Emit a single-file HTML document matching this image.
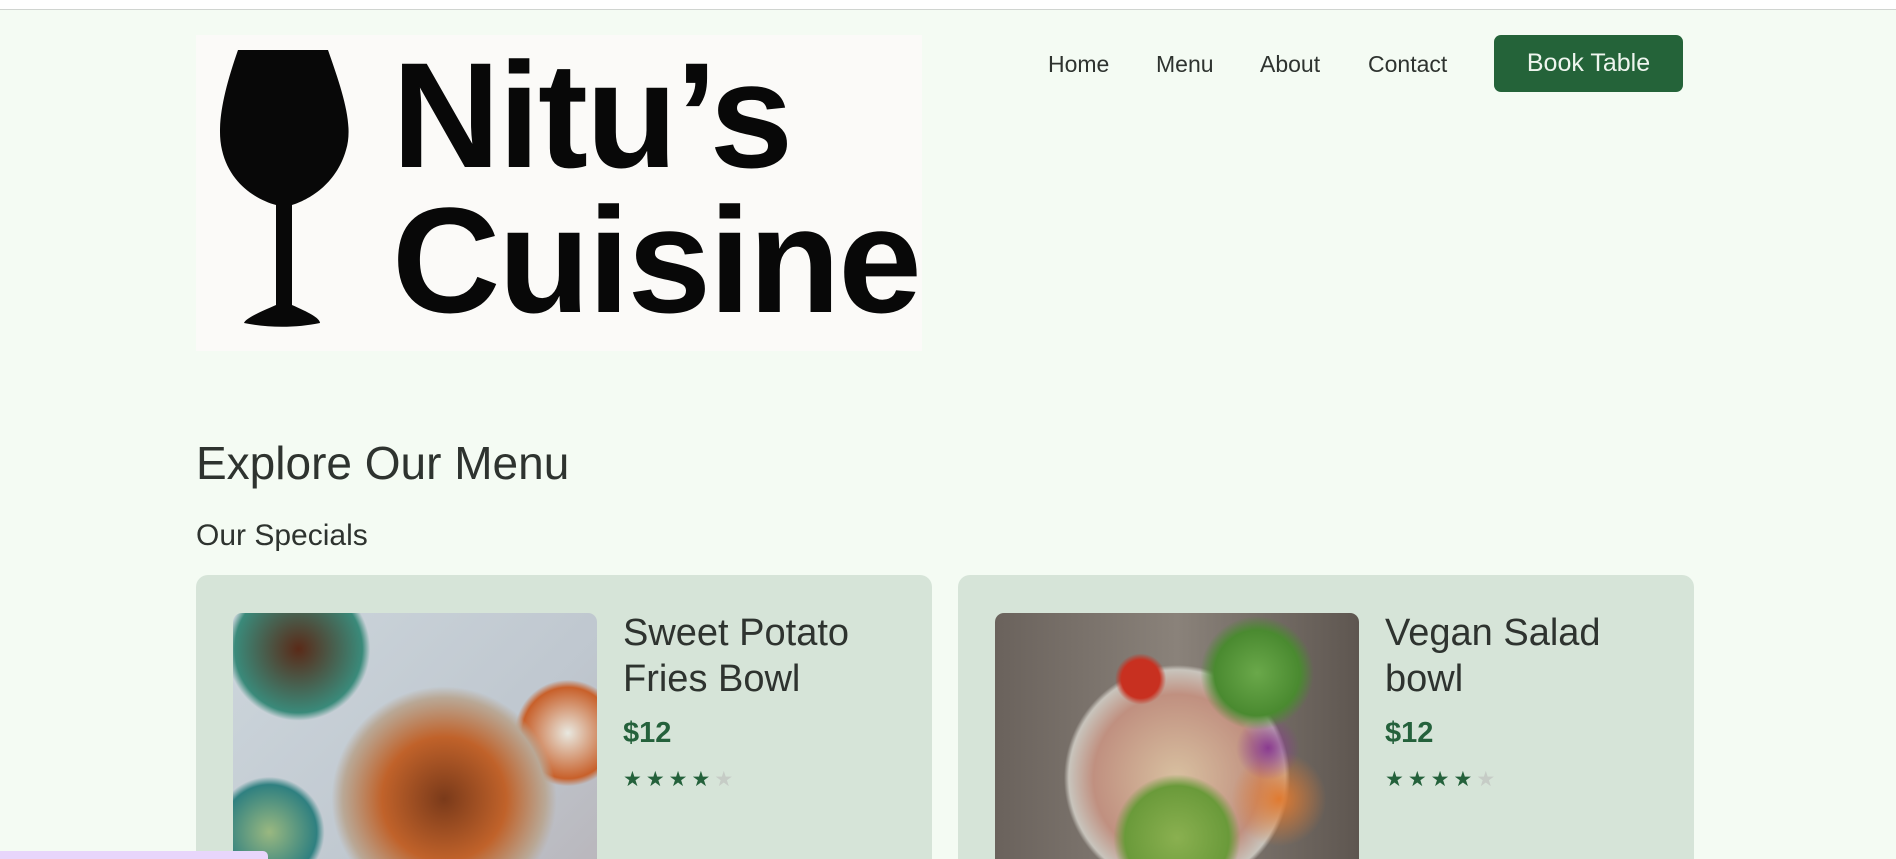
<!DOCTYPE html>
<html><head><meta charset="utf-8"><style>
*{margin:0;padding:0;box-sizing:border-box}
html,body{width:1896px;height:859px;overflow:hidden}
body{background:#f4fbf3;font-family:"Liberation Sans",sans-serif;color:#2e332f;position:relative}
.top{position:absolute;left:0;top:0;width:1896px;height:10px;background:#fff;border-bottom:1px solid #d0d4d0}
.logo{position:absolute;left:196px;top:35px;width:726px;height:316px;background:#fbfaf8;overflow:hidden}
.logo .t{position:absolute;left:196px;font-weight:bold;color:#080808;font-size:150px;letter-spacing:-2px;line-height:1}
.nav{position:absolute;top:51px;font-size:23px;color:#2e332f}
.btn{position:absolute;left:1494px;top:35px;width:189px;height:57px;background:#246339;border-radius:7px;color:#eef5ee;font-size:25px;display:flex;align-items:center;justify-content:center}
h1{position:absolute;left:196px;top:436px;font-size:46px;font-weight:normal}
h2{position:absolute;left:196px;top:519px;font-size:30px;font-weight:normal}
.card{position:absolute;top:575px;width:736px;height:300px;background:#d6e4d8;border-radius:12px}
.img{position:absolute;left:37px;top:38px;width:364px;height:300px;border-radius:9px;overflow:hidden}
.title{position:absolute;left:427px;top:35px;font-size:38px;line-height:46px}
.price{position:absolute;left:427px;top:142px;font-size:29px;font-weight:bold;color:#24613b}
.stars{position:absolute;left:427px;top:192px;font-size:21px;color:#24613b;letter-spacing:4px}
.stars span{color:#c6ccc6}
.purple{position:absolute;left:0;top:851px;width:268px;height:10px;background:#e8d5fb;border-radius:0 5px 0 0}
</style></head><body>
<div class="top"></div>
<div class="logo">
<svg style="position:absolute;left:20px;top:15px" width="140" height="285" viewBox="0 0 140 285">
<path d="M22 0 H112 C126 40 138 75 130 100 C120 135 92 150 76 155 V255 C92 262 104 268 104 273 C80 278 52 278 28 273 C30 268 44 262 60 255 V155 C42 150 14 135 6 100 C0 75 8 40 22 0Z" fill="#080808"/>
</svg>
<div class="t" style="top:5px">Nitu’s</div>
<div class="t" style="top:150px">Cuisine</div>
</div>
<div class="nav" style="left:1048px">Home</div>
<div class="nav" style="left:1156px">Menu</div>
<div class="nav" style="left:1260px">About</div>
<div class="nav" style="left:1368px">Contact</div>
<div class="btn">Book Table</div>
<h1>Explore Our Menu</h1>
<h2>Our Specials</h2>
<div class="card" style="left:196px">
<div class="img" style="background:radial-gradient(circle at 58% 62%,#7a3a1a 0,#c0622a 22%,#b9a896 36%,transparent 40%),radial-gradient(circle at 18% 12%,#5a2a18 0,#3a8a7a 16%,transparent 18%),radial-gradient(circle at 10% 73%,#9ab880 0,#2f8080 12%,transparent 14%),radial-gradient(circle at 92% 40%,#e8e8e0 0,#c8602a 12%,transparent 14%),linear-gradient(135deg,#cdd6dc,#bfc7cf 60%,#b8b3b8)"></div>
<div class="title">Sweet Potato<br>Fries Bowl</div>
<div class="price">$12</div>
<div class="stars">★★★★<span>★</span></div>
</div>
<div class="card" style="left:958px">
<div class="img" style="background:radial-gradient(circle at 40% 22%,#c83020 0,#c83020 6%,transparent 8%),radial-gradient(circle at 72% 20%,#6aa84a 0,#4a8a30 12%,transparent 16%),radial-gradient(circle at 75% 45%,#8a3a90 0,transparent 10%),radial-gradient(circle at 50% 75%,#8ab050 0,#6a9a3a 18%,transparent 22%),radial-gradient(circle at 78% 62%,#e07a30 0,transparent 14%),radial-gradient(circle at 50% 55%,#d8c0a0 0,#c09080 34%,#c8c4bc 44%,transparent 46%),linear-gradient(90deg,#6a625c,#8a827a 50%,#5e5650)"></div>
<div class="title">Vegan Salad<br>bowl</div>
<div class="price">$12</div>
<div class="stars">★★★★<span>★</span></div>
</div>
<div class="purple"></div>
</body></html>
